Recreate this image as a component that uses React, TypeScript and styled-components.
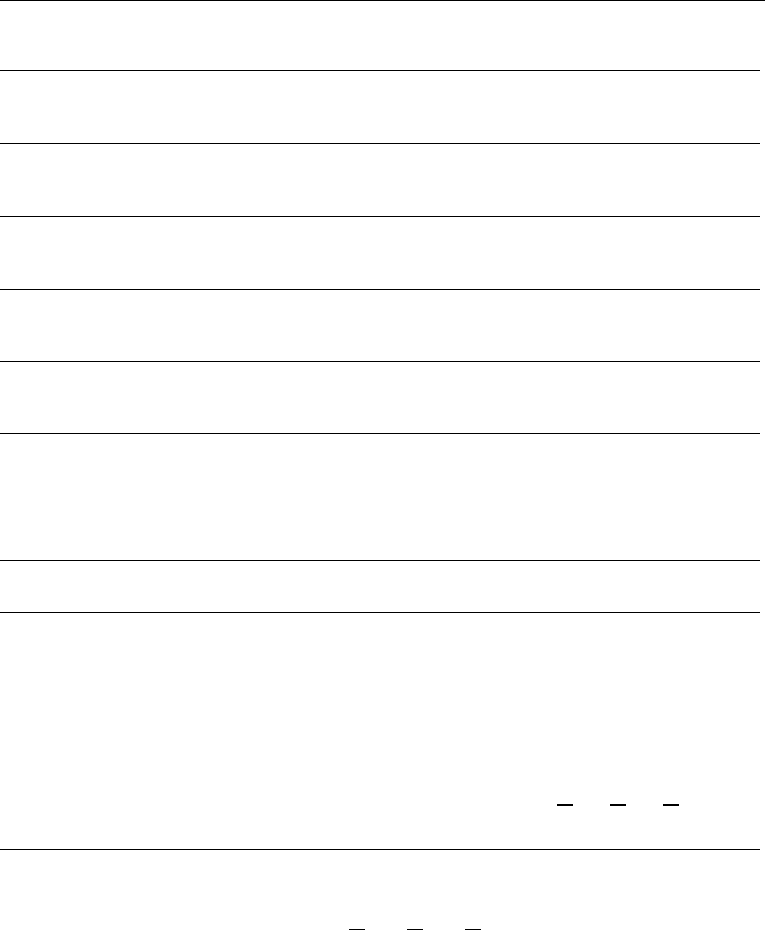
import React from "react";
import styled, { createGlobalStyle } from "styled-components";

const Global = createGlobalStyle`
  html, body { margin: 0; padding: 0; background: #fff; }
  body { font-family: "Liberation Sans", Arial, sans-serif; }
`;

const Page = styled.div`
  width: 765px;
  height: 930px;
  overflow: hidden;
  display: flex;
  flex-direction: column;
  background: #fff;
`;

const TopRule = styled.div`
  width: 765px;
  height: 1px;
  background: #000;
  flex: none;
`;

const Row = styled.div<{ $h: number; $pad?: number }>`
  width: 760px;
  height: ${(p) => p.$h}px;
  box-sizing: border-box;
  border-bottom: 1px solid #000;
  padding-top: ${(p) => p.$pad ?? 0}px;
  flex: none;
  display: flex;
  flex-direction: column;
`;

const OpenRow = styled.div<{ $pad: number }>`
  width: 760px;
  padding-top: ${(p) => p.$pad}px;
  flex: none;
  display: flex;
  flex-direction: column;
`;

const DashGroup = styled.div<{ $left: number; $gap: number }>`
  display: flex;
  gap: ${(p) => p.$gap}px;
  padding-left: ${(p) => p.$left}px;
`;

const Dash = styled.div`
  width: 16px;
  height: 1.5px;
  background: #000;
`;

const rows = [70, 73, 73, 73, 72, 72, 127, 52];

export default function App() {
  return (
    <Page>
      <Global />
      <TopRule />
      {rows.map((h, i) => (
        <Row key={i} $h={h} />
      ))}
      <Row $h={237} $pad={191}>
        <DashGroup $left={557} $gap={37}>
          <Dash />
          <Dash />
          <Dash />
        </DashGroup>
      </Row>
      <OpenRow $pad={79}>
        <DashGroup $left={349} $gap={42}>
          <Dash />
          <Dash />
          <Dash />
        </DashGroup>
      </OpenRow>
    </Page>
  );
}
